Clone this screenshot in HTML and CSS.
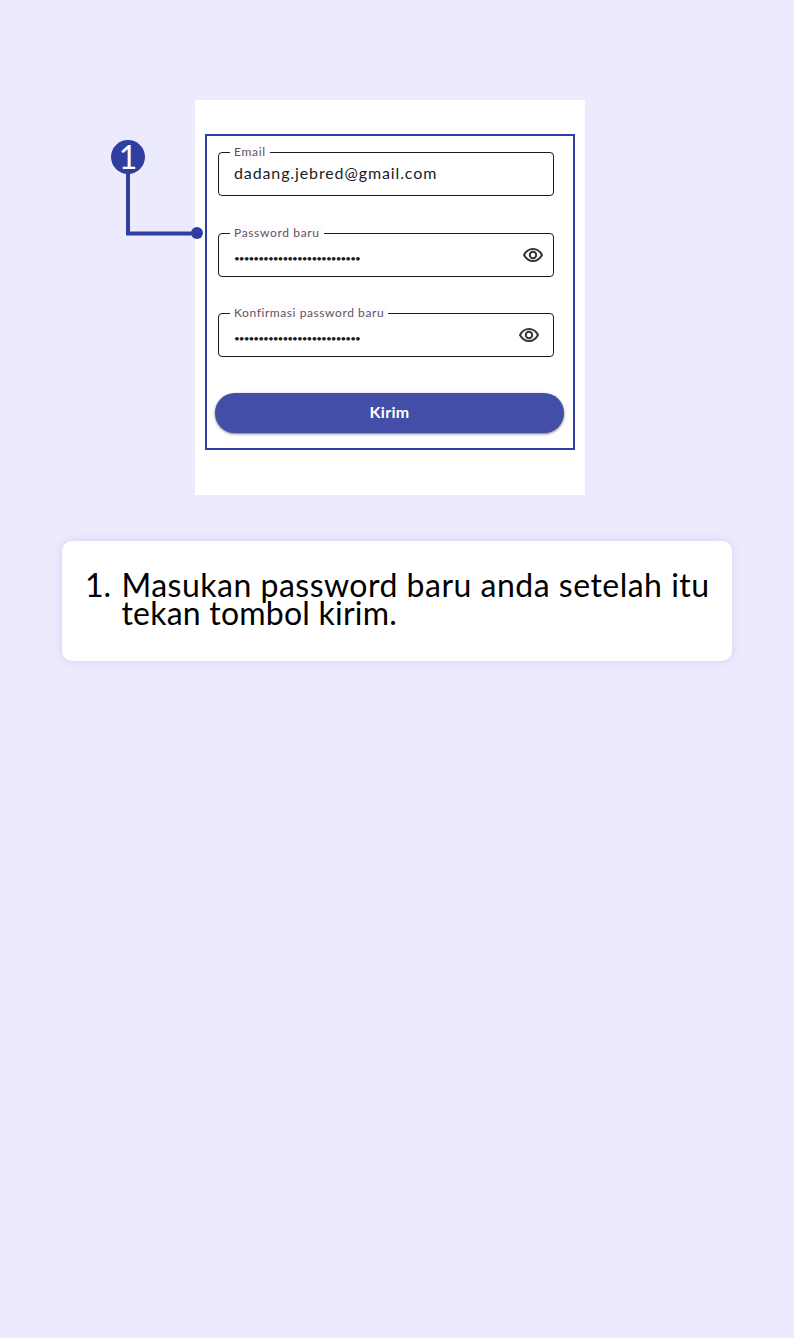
FILE: index.html
```html
<!DOCTYPE html>
<html lang="id">
<head>
<meta charset="utf-8">
<title>Panduan password baru</title>
<link rel="stylesheet" href="styles.css">
</head>
<body>
<main class="page">
  <section class="screen">
    <form class="frame">
      <div class="field">
        <span class="label label-email">Email</span>
        <span class="value">dadang.jebred@gmail.com</span>
      </div>
      <div class="field">
        <span class="label label-password">Password baru</span>
        <span class="dots">••••••••••••••••••••••••••</span>
        <svg class="eye" viewBox="0 0 20 14"><path d="M1 7C3 3.200 6.300 1 10 1s7 2.200 9 6c-2 3.800-5.300 6-9 6S3 10.800 1 7Z"/><circle cx="10" cy="7" r="3.200"/></svg>
      </div>
      <div class="field">
        <span class="label label-confirm">Konfirmasi password baru</span>
        <span class="dots">••••••••••••••••••••••••••</span>
        <svg class="eye eye-inset" viewBox="0 0 20 14"><path d="M1 7C3 3.200 6.300 1 10 1s7 2.200 9 6c-2 3.800-5.300 6-9 6S3 10.800 1 7Z"/><circle cx="10" cy="7" r="3.200"/></svg>
      </div>
      <button class="submit" type="button">Kirim</button>
    </form>
  </section>
  <div class="callout">
    <svg class="connector" viewBox="0 0 92 100"><path d="M17 30V93.500H86"/><circle cx="86" cy="93" r="6"/></svg>
    <span class="number">1</span>
  </div>
  <section class="note">
    <span class="note-number">1.</span>
    <p class="note-text"><span class="line line-first">Masukan password baru anda setelah itu</span> <span class="line line-second">tekan tombol kirim.</span></p>
  </section>
</main>
</body>
</html>
```
FILE: styles.css
```css
* { box-sizing: border-box; }
body {
  margin: 0;
  background: #ecebfe;
  font-family: Lato, "Noto Sans", sans-serif;
}
.page {
  position: relative;
  min-height: 1338px;
  padding: 100px 62px 0;
}
.screen {
  width: 390px;
  height: 395px;
  margin-left: 133px;
  padding: 34px 10px;
  background: #fff;
}
.frame {
  display: flex;
  flex-direction: column;
  height: 316px;
  padding: 16px 9px 0 11px;
  border: 2px solid #303e9f;
}
.field {
  position: relative;
  display: flex;
  align-items: center;
  justify-content: space-between;
  width: 336px;
  height: 44px;
  margin-bottom: 36.500px;
  padding: 0 10px 0 15px;
  border: 1px solid #1c1b1f;
  border-radius: 4px;
}
.label {
  position: absolute;
  left: 11px;
  top: -9px;
  padding: 0 4px;
  background: #fffbfe;
  color: #5a5660;
  font-size: 12px;
  line-height: 16px;
  white-space: nowrap;
}
.label-email { letter-spacing: 0.700px; }
.label-password { letter-spacing: 0.650px; }
.label-confirm { letter-spacing: 0.580px; }
.value {
  color: #1c1b1f;
  font-size: 16px;
  line-height: 20px;
  padding-bottom: 2px;
  letter-spacing: 0.880px;
}
.dots {
  color: #1c1b1f;
  font-size: 10px;
  line-height: 20px;
  letter-spacing: -0.960px;
  padding-top: 6px;
}
.eye {
  width: 20px;
  height: 14px;
  fill: none;
  stroke: #34343c;
  stroke-width: 2;
}
.eye-inset { margin-right: 4px; }
.submit {
  width: 349px;
  height: 40px;
  margin: -1px 0 0 -3px;
  padding: 0 0 1px;
  border: 0;
  border-radius: 20px;
  background: #424ea8;
  box-shadow: 0 1px 2px rgba(0, 0, 0, 0.4), 0 1px 3px 1px rgba(0, 0, 0, 0.12);
  color: #fff;
  font: bold 16px/38px Lato, sans-serif;
  letter-spacing: 0.300px;
}
.callout {
  position: absolute;
  left: 111px;
  top: 140px;
  width: 92px;
  height: 100px;
}
.connector {
  position: absolute;
  inset: 0;
  width: 92px;
  height: 100px;
}
.connector path {
  fill: none;
  stroke: #303e9f;
  stroke-width: 4;
}
.connector circle { fill: #303e9f; }
.number {
  position: relative;
  display: block;
  width: 34px;
  height: 34px;
  border-radius: 50%;
  background: #303e9f;
  color: #fff;
  font-size: 32px;
  line-height: 34px;
  text-align: center;
}
.note {
  display: flex;
  width: 670px;
  height: 120px;
  margin-top: 46px;
  padding: 30px 0 0 23px;
  border-radius: 10px;
  background: #fff;
  box-shadow: 0 0 10px rgba(60, 50, 120, 0.14);
  color: #000;
  font-size: 32px;
  line-height: 28px;
}
.note-number { width: 36.500px; }
.note-text { margin: 0; }
.line { display: block; white-space: nowrap; }
.line-first { letter-spacing: 0.490px; }
.line-second { letter-spacing: 0.220px; }
```
